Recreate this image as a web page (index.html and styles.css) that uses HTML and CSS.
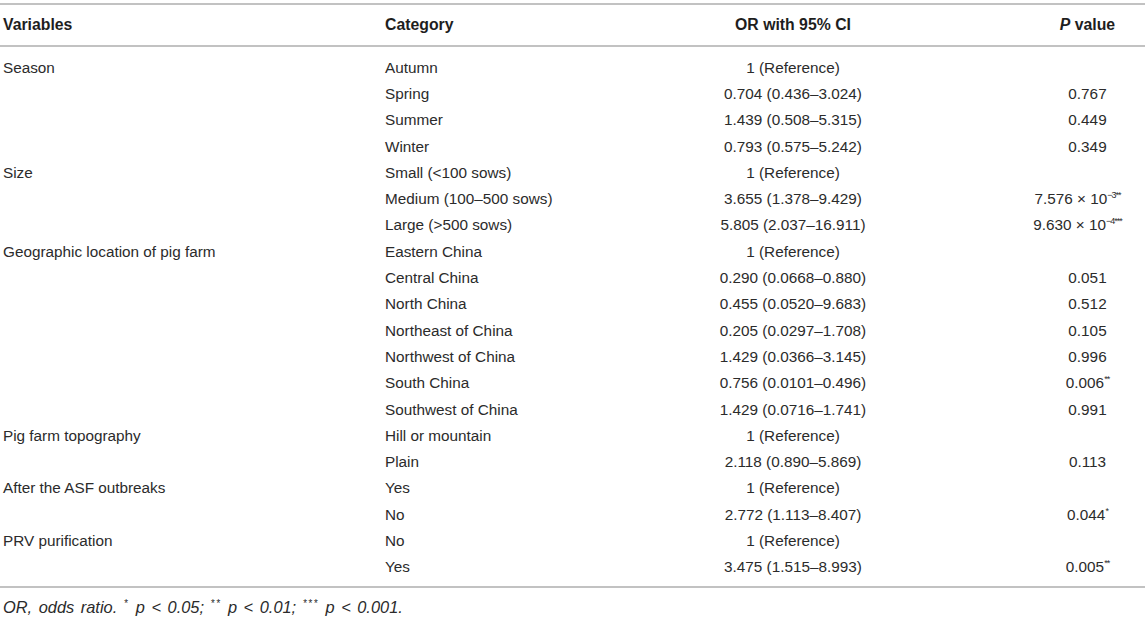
FILE: index.html
```html
<!DOCTYPE html>
<html>
<head>
<meta charset="utf-8">
<link rel="stylesheet" href="styles.css">
</head>
<body>
<table class="tbl">
  <colgroup>
    <col class="c1"><col class="c2"><col class="c3"><col class="c4">
  </colgroup>
  <thead>
    <tr><th class="l">Variables</th><th class="l">Category</th><th class="or">OR with 95% CI</th><th class="p"><i>P</i> value</th></tr>
  </thead>
  <tbody>
    <tr class="first"><td>Season</td><td>Autumn</td><td class="or">1 (Reference)</td><td class="p"></td></tr>
    <tr><td></td><td>Spring</td><td class="or">0.704 (0.436–3.024)</td><td class="p">0.767</td></tr>
    <tr><td></td><td>Summer</td><td class="or">1.439 (0.508–5.315)</td><td class="p">0.449</td></tr>
    <tr><td></td><td>Winter</td><td class="or">0.793 (0.575–5.242)</td><td class="p">0.349</td></tr>
    <tr><td>Size</td><td>Small (&lt;100 sows)</td><td class="or">1 (Reference)</td><td class="p"></td></tr>
    <tr><td></td><td>Medium (100–500 sows)</td><td class="or">3.655 (1.378–9.429)</td><td class="p pl">7.576 × 10<sup>−3**</sup></td></tr>
    <tr><td></td><td>Large (&gt;500 sows)</td><td class="or">5.805 (2.037–16.911)</td><td class="p pl">9.630 × 10<sup>−4***</sup></td></tr>
    <tr><td>Geographic location of pig farm</td><td>Eastern China</td><td class="or">1 (Reference)</td><td class="p"></td></tr>
    <tr><td></td><td>Central China</td><td class="or">0.290 (0.0668–0.880)</td><td class="p">0.051</td></tr>
    <tr><td></td><td>North China</td><td class="or">0.455 (0.0520–9.683)</td><td class="p">0.512</td></tr>
    <tr><td></td><td>Northeast of China</td><td class="or">0.205 (0.0297–1.708)</td><td class="p">0.105</td></tr>
    <tr><td></td><td>Northwest of China</td><td class="or">1.429 (0.0366–3.145)</td><td class="p">0.996</td></tr>
    <tr><td></td><td>South China</td><td class="or">0.756 (0.0101–0.496)</td><td class="p">0.006<sup>**</sup></td></tr>
    <tr><td></td><td>Southwest of China</td><td class="or">1.429 (0.0716–1.741)</td><td class="p">0.991</td></tr>
    <tr><td>Pig farm topography</td><td>Hill or mountain</td><td class="or">1 (Reference)</td><td class="p"></td></tr>
    <tr><td></td><td>Plain</td><td class="or">2.118 (0.890–5.869)</td><td class="p">0.113</td></tr>
    <tr><td>After the ASF outbreaks</td><td>Yes</td><td class="or">1 (Reference)</td><td class="p"></td></tr>
    <tr><td></td><td>No</td><td class="or">2.772 (1.113–8.407)</td><td class="p">0.044<sup>*</sup></td></tr>
    <tr><td>PRV purification</td><td>No</td><td class="or">1 (Reference)</td><td class="p"></td></tr>
    <tr class="last"><td></td><td>Yes</td><td class="or">3.475 (1.515–8.993)</td><td class="p">0.005<sup>**</sup></td></tr>
  </tbody>
</table>
<p class="note"><i>OR, odds ratio. <sup>*</sup> p &lt; 0.05; <sup>**</sup> p &lt; 0.01; <sup>***</sup> p &lt; 0.001.</i></p>
</body>
</html>
```

FILE: styles.css
```css
html, body {
  margin: 0;
  padding: 0;
  background: #fff;
}
body {
  font-family: "Liberation Sans", Arial, sans-serif;
  font-size: 15.3px;
  color: #2b2b2b;
}
.tbl {
  width: 1145px;
  border-collapse: collapse;
  table-layout: fixed;
  margin-top: 3px;
  border-top: 2px solid #c2c2c2;
  border-bottom: 2px solid #c2c2c2;
}
.c1 { width: 382px; }
.c2 { width: 278px; }
.c3 { width: 266px; }
.c4 { width: 219px; }
th {
  font-weight: bold;
  font-size: 15.8px;
  height: 40px;
  padding: 0 0 0 3px;
  border-bottom: 2px solid #c2c2c2;
  color: #1e1e1e;
  vertical-align: middle;
}
th.l { text-align: left; }
td {
  padding: 0 0 0 3px;
  height: 26.3px;
  line-height: 17px;
  vertical-align: middle;
  white-space: nowrap;
}
tr.first td { padding-top: 7px; }
tr.last td { padding-bottom: 6px; }
.or { text-align: center; padding-left: 0; }
.p { text-align: center; padding-left: 104px; }
.p.pl { padding-left: 84px; }
sup {
  font-size: 9px;
  line-height: 0;
  vertical-align: 6px;
  letter-spacing: -1px;
}
.note {
  margin: 10px 0 0 3px;
  font-size: 16.4px;
  word-spacing: 2px;
  color: #2b2b2b;
}
.note sup { font-size: 10px; vertical-align: 6px; letter-spacing: 1.5px; }
```
